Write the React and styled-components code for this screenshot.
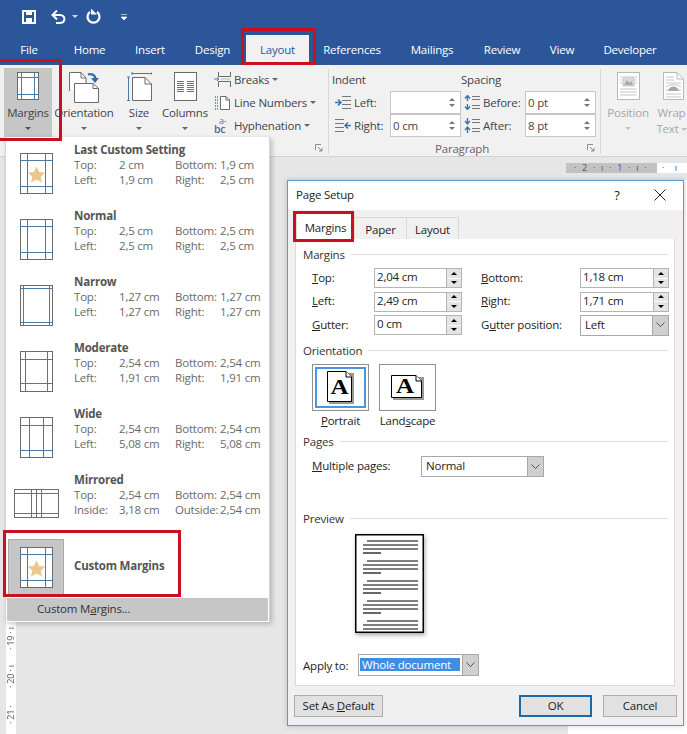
import React from "react";
import styled, { createGlobalStyle } from "styled-components";

const Global = createGlobalStyle`
  html, body { margin: 0; padding: 0; background: #e6e6e6; }
  * { box-sizing: border-box; }
`;

const Page = styled.div`
  position: relative;
  width: 687px;
  height: 734px;
  overflow: hidden;
  display: flex;
  flex-direction: column;
  background: #e6e6e6;
  font-family: "Open Sans", "Noto Sans", sans-serif;
  font-size: 11.5px;
  letter-spacing: -0.2px;
  color: #444;
`;
const Glyph = styled.svg`
  display: block;
  flex: none;
  margin-left: ${p => p.$ml || 0}px;
`;
const TitleBar = styled.div`
  height: 33px;
  background: #2b579a;
  display: flex;
  align-items: center;
  padding: 0 0 0 22px;
  flex: none;
`;
const QatIcon = styled.svg`
  display: block;
  flex: none;
  margin-left: ${p => p.$before || 0}px;
  margin-right: ${p => p.$gap || 0}px;
`;
const TabBar = styled.div`
  height: 32px;
  background: #2b579a;
  display: flex;
  align-items: flex-end;
  flex: none;
`;
const Tab = styled.div`
  width: ${p => p.$w}px;
  height: 30px;
  padding-bottom: 2px;
  display: flex;
  align-items: center;
  justify-content: center;
  color: ${p => (p.$active ? "#2b579a" : "#fff")};
  background: ${p => (p.$active ? "#f1f1f1" : "transparent")};
`;
const Ribbon = styled.div`
  height: 92px;
  flex: none;
  display: flex;
  background: #f1f1f1;
  border-bottom: 1px solid #d2d2d2;
`;
const Group = styled.div`
  width: ${p => p.$w}px;
  flex: none;
  display: flex;
  flex-direction: column;
`;
const GroupDivider = styled.div`
  width: 1px;
  flex: none;
  margin: 4px 0 2px;
  background: #d8d8d8;
`;
const GroupBody = styled.div`
  height: 75px;
  padding: 3px 0 0 ${p => p.$pad || 0}px;
  display: flex;
  flex: none;
`;
const GroupFooter = styled.div`
  flex: 1;
  display: grid;
  grid-template-columns: 1fr auto 1fr;
  align-items: center;
  padding-right: 5px;
  color: #666;
`;
const Launcher = styled.svg`
  justify-self: end;
  display: block;
`;
const BigButton = styled.div`
  width: ${p => p.$w}px;
  height: 69px;
  margin-left: ${p => p.$ml || 0}px;
  flex: none;
  display: flex;
  flex-direction: column;
  align-items: center;
  padding-top: 4px;
  background: ${p => (p.$on ? "#c6c6c6" : "transparent")};
  color: ${p => (p.$off ? "#a6a6a6" : "#444")};
  white-space: nowrap;
`;
const BigIcon = styled.div`
  height: 31px;
  flex: none;
  display: flex;
  align-items: flex-start;
  justify-content: center;
`;
const BigLabel = styled.div`
  height: 16px;
  line-height: 16px;
  margin-top: ${p => p.$mt ?? 2}px;
`;
const Caret = styled.span`
  display: inline-block;
  width: 0;
  height: 0;
  flex: none;
  border-left: 3px solid transparent;
  border-right: 3px solid transparent;
  border-top: 3px solid ${p => p.$color || "#666"};
  margin-top: ${p => p.$mt || 0}px;
  margin-left: ${p => p.$ml || 0}px;
  vertical-align: middle;
`;
const SmallStack = styled.div`
  margin-left: 4px;
  display: flex;
  flex-direction: column;
`;
const SmallRow = styled.div`
  height: 23px;
  display: flex;
  align-items: center;
  white-space: nowrap;
`;
const SmallIcon = styled.svg`
  display: block;
  flex: none;
  width: 17px;
  height: 17px;
  margin-right: 3px;
  overflow: visible;
`;
const ParaCol = styled.div`
  width: ${p => p.$w}px;
  flex: none;
  display: flex;
  flex-direction: column;
`;
const ParaHead = styled.div`
  height: 23px;
  display: flex;
  align-items: center;
`;
const ParaRow = styled.div`
  height: 23px;
  display: flex;
  align-items: center;
`;
const ParaIcon = styled.svg`
  display: block;
  flex: none;
  margin: 0 3px 0 ${p => p.$ml || 0}px;
`;
const RibbonSpin = styled.div`
  width: 71px;
  height: 23px;
  margin-left: auto;
  background: #fff;
  border: 1px solid #c6c6c6;
  display: flex;
  align-items: center;
  justify-content: space-between;
  padding: 0 5px 0 2px;
`;
const RibbonArrows = styled.div`
  display: flex;
  flex-direction: column;
  gap: 3px;
`;
const UpArrow = styled.span`
  display: block;
  width: 0;
  height: 0;
  border-left: 3px solid transparent;
  border-right: 3px solid transparent;
  border-bottom: 3px solid ${p => p.$c || "#777"};
`;
const DownArrow = styled.span`
  display: block;
  width: 0;
  height: 0;
  border-left: 3px solid transparent;
  border-right: 3px solid transparent;
  border-top: 3px solid ${p => p.$c || "#777"};
`;
const WrapClip = styled.div`
  width: 31px;
  margin-left: 4px;
  flex: none;
`;
const RulerBar = styled.div`
  height: 23px;
  flex: none;
  display: flex;
  justify-content: flex-end;
  padding-top: 6px;
`;
const HRuler = styled.div`
  width: 121px;
  height: 10px;
  display: flex;
  background: #fff;
  font-size: 9px;
  line-height: 10px;
  color: #555;
  white-space: nowrap;
`;
const HRulerDark = styled.div`
  width: 91px;
  flex: none;
  background: #c2c2c2;
  padding-left: 8px;
  letter-spacing: 1.7px;
`;
const HRulerLight = styled.div`
  padding-left: 5px;
  letter-spacing: 4px;
`;
const Workspace = styled.div`
  flex: 1;
  display: flex;
  justify-content: space-between;
  padding-left: 6px;
`;
const VRuler = styled.div`
  width: 10px;
  background: #fff;
  display: flex;
  flex-direction: column;
  justify-content: flex-end;
  align-items: center;
`;
const VRulerCell = styled.div`
  height: 38px;
  flex: none;
  writing-mode: vertical-rl;
  transform: rotate(180deg);
  font-size: 9px;
  line-height: 10px;
  color: #555;
  text-align: center;
  white-space: nowrap;
`;
const DocPage = styled.div`
  width: 119px;
  background: #fff;
`;

const Menu = styled.div`
  position: absolute;
  left: 5px;
  top: 137px;
  width: 265px;
  height: 485px;
  background: #fff;
  border: 1px solid #d4d4d4;
  border-top: none;
  box-shadow: 2px 2px 5px rgba(0, 0, 0, 0.22);
  padding-top: 3px;
  display: flex;
  flex-direction: column;
`;
const MenuRow = styled.div`
  height: 66px;
  flex: none;
  display: flex;
  padding-top: 2px;
`;
const MenuIconCol = styled.div`
  width: 61px;
  height: 57px;
  margin-top: 3px;
  margin-right: 7px;
  flex: none;
  display: flex;
  align-items: center;
  justify-content: center;
`;
const MenuText = styled.div`
  display: grid;
  grid-template-columns: 45px 56px 45px auto;
  grid-auto-rows: 15px;
  line-height: 15px;
  color: #6a6a6a;
  white-space: nowrap;
`;
const MenuTitle = styled.div`
  grid-column: 1 / -1;
  font-weight: 700;
  color: #555;
`;
const CustomRow = styled.div`
  height: 60px;
  flex: none;
  display: flex;
  align-items: center;
  margin-top: 1px;
`;
const CustomThumb = styled.div`
  width: 56px;
  height: 56px;
  margin-left: 2px;
  margin-right: 10px;
  background: #c6c6c6;
  border: 1px solid #a8a8a8;
  display: flex;
  align-items: center;
  justify-content: center;
`;
const CustomLabel = styled.div`
  font-weight: 700;
  color: #555;
  padding-bottom: 3px;
`;
const MenuFooter = styled.div`
  height: 25px;
  flex: none;
  background: #c6c6c6;
  border: 1px solid #fff;
  padding: 0 0 2px 30px;
  display: flex;
  align-items: center;
  color: #333;
`;
const Key = styled.span`
  text-decoration: underline;
`;

const Dialog = styled.div`
  position: absolute;
  left: 287px;
  top: 180px;
  width: 397px;
  height: 546px;
  background: #f0f0f0;
  border: 1px solid #5a9ad0;
  box-shadow: 0 0 5px rgba(0, 0, 0, 0.2);
  color: #222;
  display: flex;
  flex-direction: column;
`;
const DialogTitle = styled.div`
  height: 29px;
  flex: none;
  background: #fff;
  display: flex;
  align-items: center;
  padding: 0 0 2px 8px;
`;
const TitleText = styled.div`
  flex: 1;
`;
const HelpMark = styled.div`
  width: 20px;
  text-align: center;
  font-size: 13px;
  margin-right: 27px;
`;
const CloseMark = styled.svg`
  display: block;
  margin-right: 17px;
`;
const DialogTabs = styled.div`
  height: 29px;
  flex: none;
  display: flex;
  align-items: flex-end;
  padding-left: 8px;
`;
const DialogTab = styled.div`
  width: ${p => p.$w}px;
  height: ${p => (p.$active ? 27 : 22)}px;
  padding-top: ${p => (p.$active ? 3 : 1)}px;
  display: flex;
  align-items: center;
  justify-content: center;
  background: ${p => (p.$active ? "#fff" : "#f0f0f0")};
  border: 1px solid #d9d9d9;
  border-bottom: none;
  margin-right: -1px;
`;
const Panel = styled.div`
  height: 447px;
  flex: none;
  margin: 0 8px 0 7px;
  background: #fff;
  border: 1px solid #d9d9d9;
  border-top: none;
  padding: 0 6px 0 7px;
  display: flex;
  flex-direction: column;
`;
const SectionHead = styled.div`
  height: 14px;
  line-height: 14px;
  flex: none;
  margin-top: ${p => p.$mt}px;
  margin-bottom: ${p => p.$mb}px;
  display: flex;
  align-items: center;
  gap: 6px;
  color: #333;
  &::after {
    content: "";
    flex: 1;
    height: 1px;
    background: #dcdcdc;
    margin-top: -2px;
  }
`;
const FieldGrid = styled.div`
  display: grid;
  grid-template-columns: 62px 88px 19px 99px 89px;
  grid-auto-rows: 20px;
  row-gap: 3.5px;
  padding-left: 9px;
  align-items: center;
`;
const FieldLabel = styled.div`
  white-space: nowrap;
  grid-column: ${p => p.$col};
  padding-bottom: 2px;
`;
const SpinBox = styled.div`
  height: 20px;
  border: 1px solid #b4b4b4;
  background: #fff;
  display: flex;
  justify-content: space-between;
  padding-left: 2px;
  line-height: 16px;
  grid-column: ${p => p.$col};
`;
const SpinButtons = styled.div`
  width: 16px;
  flex: none;
  margin: -1px -1px -1px 0;
  display: flex;
  flex-direction: column;
  border: 1px solid #b4b4b4;
  background: #fff;
`;
const SpinButton = styled.div`
  flex: 1;
  background: #e4e4e4;
  display: flex;
  align-items: center;
  justify-content: center;
  & + & {
    border-top: 1px solid #fff;
  }
`;
const Combo = styled.div`
  height: ${p => p.$h || 21}px;
  width: ${p => (p.$w ? p.$w + "px" : "auto")};
  border: 1px solid #a8a8a8;
  background: #fff;
  display: flex;
  align-items: stretch;
  padding-left: ${p => p.$pl ?? 4}px;
  grid-column: ${p => p.$col || "auto"};
  flex: none;
`;
const ComboValue = styled.div`
  flex: 1;
  display: flex;
  align-items: center;
  padding-bottom: 2px;
`;
const ComboButton = styled.div`
  width: 17px;
  flex: none;
  margin: -1px -1px -1px 0;
  background: #cfcfcf;
  border: 1px solid #a8a8a8;
  display: flex;
  align-items: center;
  justify-content: center;
`;
const Selected = styled.span`
  background: #3d8ee6;
  color: #fff;
  height: 13px;
  line-height: 13px;
  width: 100px;
  padding-left: 2px;
  white-space: nowrap;
`;
const OrientRow = styled.div`
  display: flex;
  gap: 10px;
  padding-left: 9px;
`;
const OrientItem = styled.div`
  width: 57px;
  display: flex;
  flex-direction: column;
  align-items: center;
`;
const OrientButton = styled.div`
  width: 57px;
  height: 47px;
  border: 1px solid #8f8f8f;
  background: #fff;
  display: flex;
  align-items: center;
  justify-content: center;
  ${p => p.$focus && "box-shadow: inset 0 0 0 2px #fff, inset 0 0 0 4px #4a95e0;"}
`;
const OrientLabel = styled.div`
  height: 14px;
  line-height: 14px;
  margin-top: 3px;
  white-space: nowrap;
`;
const PagesRow = styled.div`
  display: flex;
  align-items: center;
  padding-left: 9px;
  height: 21px;
`;
const PagesLabel = styled.div`
  width: 109px;
  white-space: nowrap;
  padding-bottom: 2px;
`;
const PreviewSheet = styled.svg`
  display: block;
  flex: none;
  margin-left: 52px;
  filter: drop-shadow(1px 2px 2px rgba(0, 0, 0, 0.35));
`;
const ApplyRow = styled.div`
  display: flex;
  align-items: center;
  margin-top: 21px;
`;
const ApplyLabel = styled.div`
  width: 55px;
  white-space: nowrap;
`;
const DialogFooter = styled.div`
  flex: 1;
  display: flex;
  align-items: flex-start;
  padding: 9px 6px 0;
`;
const PushButton = styled.div`
  width: ${p => p.$w}px;
  height: 22px;
  margin-left: ${p => p.$ml || 0}px;
  padding-bottom: 2px;
  background: #e1e1e1;
  border: ${p => (p.$default ? "2px solid #1b6aa8" : "1px solid #adadad")};
  display: flex;
  align-items: center;
  justify-content: center;
  white-space: nowrap;
`;
const Callout = styled.div`
  position: absolute;
  left: ${p => p.$x}px;
  top: ${p => p.$y}px;
  width: ${p => p.$w}px;
  height: ${p => p.$h}px;
  border: 3px solid #c8101e;
  pointer-events: none;
`;

const GREY = "#6b6b6b";
const BLUE = "#4a7aa8";

const MarginGlyph = ({ w = 33, h = 41, vx, hy, star, stroke = GREY, blue = BLUE, mirrored }) => (
  <Glyph width={w} height={h} viewBox={`0 0 ${w} ${h}`}>
    <rect x=".5" y=".5" width={w - 1} height={h - 1} fill="#fff" stroke={stroke} />
    {vx.map(x => <line key={"v" + x} x1={x + 0.5} x2={x + 0.5} y1="0" y2={h} stroke={blue} />)}
    {hy.map(y => <line key={"h" + y} y1={y + 0.5} y2={y + 0.5} x1="0" x2={w} stroke={blue} />)}
    {mirrored && <line x1={w / 2} x2={w / 2} y1="0" y2={h} stroke={stroke} />}
    {star && (
      <polygon
        points="16.5,13.5 19.2,19 25.2,19.6 20.7,23.7 22,29.5 16.5,26.6 11,29.5 12.3,23.7 7.8,19.6 13.8,19"
        fill="#ecc78c"
      />
    )}
  </Glyph>
);

const OrientationGlyph = () => (
  <Glyph width="30" height="31" viewBox="0 0 30 31">
    <path d="M.5 19V.5H12L17 6V11" fill="#fff" stroke="#6b6b6b" />
    <path d="M12 .5V6H17" fill="none" stroke="#6b6b6b" />
    <path d="M5.5 11.5H24L29.5 16.5V30.5H5.5Z" fill="#fff" stroke="#6b6b6b" />
    <path d="M24 11.5V16.5H29.5" fill="none" stroke="#6b6b6b" />
    <path d="M19 2.5C23 1.5 26 3 26.5 6.5" fill="none" stroke="#2f6da8" strokeWidth="2.2" />
    <path d="M22 6H30L26 11Z" fill="#2f6da8" />
  </Glyph>
);
const SizeGlyph = () => (
  <Glyph width="25" height="29" viewBox="0 0 25 29">
    <path d="M5.5 5.5H18L24.5 12V28.5H5.5Z" fill="#fff" stroke="#6b6b6b" />
    <path d="M18 5.5V12H24.5" fill="none" stroke="#6b6b6b" />
    <path d="M5 1.5H25M5 0V3M25 0V3M1.5 5V28.5M0 5H3M0 28.5H3" fill="none" stroke="#4a7aa8" />
  </Glyph>
);
const ColumnsGlyph = () => (
  <Glyph width="23" height="29" viewBox="0 0 23 29">
    <rect x=".5" y=".5" width="22" height="28" fill="#fff" stroke="#6b6b6b" />
    {[9, 11, 13, 15, 17, 19].map(y => (
      <path key={y} d={`M3 ${y + .5}H10M13 ${y + .5}H20`} stroke="#4a7aa8" />
    ))}
  </Glyph>
);
const BreaksIcon = () => (
  <SmallIcon viewBox="0 0 17 17">
    <path d="M4.5 1V5.5H16.5V1M4.5 16V10.5H16.5V16" fill="none" stroke="#6b6b6b" />
    <path d="M0 8H5M3 6L5 8L3 10" fill="none" stroke="#4a7aa8" />
    <path d="M7 8H16" stroke="#b8b8b8" />
  </SmallIcon>
);
const LineNumIcon = () => (
  <SmallIcon viewBox="0 0 17 17">
    <path d="M6.5 2.5H12L15.5 6V15.5H6.5Z" fill="#fff" stroke="#6b6b6b" />
    <path d="M12 2.5V6H15.5" fill="none" stroke="#6b6b6b" />
    <path d="M1 3H4M1 6H4M1 9H4M1 12H4M1 15H4" stroke="#4a7aa8" strokeDasharray="1 1" strokeWidth="1.5" />
  </SmallIcon>
);
const HyphenIcon = () => (
  <SmallIcon viewBox="0 0 17 17">
    <text x="5" y="7" fontSize="9" fontFamily="Open Sans, sans-serif" fill="#4a7aa8">a-</text>
    <text x="0" y="16" fontSize="10.5" fontFamily="Open Sans, sans-serif" fontWeight="600" fill="#4a6a8a">bc</text>
  </SmallIcon>
);
const LinesPlusArrow = ({ flip }) => (
  <ParaIcon $ml={3} width="16" height="13" viewBox="0 0 16 13">
    {flip ? (
      <>
        <path d="M0 .5H9M0 4.5H9M0 8.5H9M0 12.5H9" stroke="#777" />
        <path d="M16 6.5H10M13 3.5L10 6.5L13 9.5" fill="none" stroke="#2f76bd" strokeWidth="1.5" />
      </>
    ) : (
      <>
        <path d="M0 6.5H5M3 3.5L6 6.5L3 9.5" fill="none" stroke="#2f76bd" strokeWidth="1.5" />
        <path d="M7 .5H16M7 4.5H16M7 8.5H16M7 12.5H16" stroke="#777" />
      </>
    )}
  </ParaIcon>
);
const SpacingIcon = ({ down }) => (
  <ParaIcon $ml={3} width="16" height="15" viewBox="0 0 16 15">
    {down ? (
      <path d="M3.5 0V5M1 3L3.5 6L6 3M3.5 15V9M1 12L3.5 9L6 12" fill="none" stroke="#2f76bd" strokeWidth="1.4" />
    ) : (
      <path d="M3.5 6V1M1 3.5L3.5 .5L6 3.5M3.5 9V14M1 11.5L3.5 14.5L6 11.5" fill="none" stroke="#2f76bd" strokeWidth="1.4" />
    )}
    <path d="M8 1.5H16M8 4.5H16M8 10.5H16M8 13.5H16" stroke="#777" />
  </ParaIcon>
);
const PositionGlyph = () => (
  <Glyph width="23" height="28" viewBox="0 0 23 28">
    <rect x=".5" y=".5" width="22" height="27" fill="#fff" stroke="#b8b8b8" />
    <rect x="6" y="5" width="11" height="9" fill="#d9d9d9" stroke="#c8c8c8" />
    <path d="M7 13L10 8L12 11L14 9L16 13Z" fill="#a8a8a8" />
    <path d="M3 5H5M3 8H5M3 11H5M18 5H20M18 8H20M18 11H20M3 17H20M3 20H20M3 23H20" stroke="#c6c6c6" />
  </Glyph>
);
const WrapGlyph = () => (
  <Glyph $ml={3} width="21" height="28" viewBox="0 0 21 28">
    <path d="M.5 .5H14L20.5 7V27.5H.5Z" fill="#fff" stroke="#b8b8b8" />
    <path d="M14 .5V7H20.5" fill="none" stroke="#b8b8b8" />
    <path d="M3 5H11M3 8H11M3 11H18M3 22H18M3 25H18" stroke="#c6c6c6" />
    <path d="M5 19C6 13 15 13 16 19Z" fill="#a8a8a8" />
    <path d="M3 15C6 12 15 12 18 15M3 18H5M16 18H18" fill="none" stroke="#c6c6c6" />
  </Glyph>
);
const LauncherIcon = () => (
  <Launcher width="8" height="8" viewBox="0 0 8 8">
    <path d="M.5 6V.5H6" fill="none" stroke="#8a8a8a" />
    <path d="M3 3L7 7M7 4V7H4" fill="none" stroke="#8a8a8a" />
  </Launcher>
);
const Chevron = () => (
  <Glyph width="9" height="6" viewBox="0 0 9 6">
    <path d="M.5 .5L4.5 4.5L8.5 .5" fill="none" stroke="#555" />
  </Glyph>
);
const OrientGlyph = ({ land }) => {
  const w = land ? 31 : 25;
  const h = land ? 23 : 31;
  const cx = land ? 14 : 12.5;
  const base = land ? 18 : 23;
  return (
    <Glyph width={w + 2} height={h + 2} viewBox={`0 0 ${w + 2} ${h + 2}`}>
      <rect x="2" y="2" width={w} height={h} fill="#999" />
      <path d={`M.5 .5H${w - 6}L${w - .5} 6V${h - .5}H.5Z`} fill="#fff" stroke="#000" />
      <path d={`M${w - 6} .5V6H${w - .5}`} fill="#fff" stroke="#000" />
      <text
        transform={`translate(${cx} ${base}) scale(1.25 1)`}
        textAnchor="middle"
        letterSpacing="0"
        fontFamily="Liberation Serif, serif"
        fontWeight="700"
        fontSize="20"
        fill="#000"
      >
        A
      </text>
    </Glyph>
  );
};

const PreviewLines = () => {
  const blocks = [7, 27, 47, 67, 87];
  return (
    <PreviewSheet width="69" height="99" viewBox="0 0 69 99">
      <rect x=".75" y=".75" width="67.5" height="97.5" fill="#fff" stroke="#000" strokeWidth="1.5" />
      {blocks.map(y => (
        <g key={y} stroke="#000" strokeWidth="1.2">
          <path d={`M12 ${y}H63`} />
          {y + 4 < 97 && <path d={`M8 ${y + 4}H63`} />}
          {y + 8 < 97 && <path d={`M8 ${y + 8}H63`} />}
          {y + 12 < 97 && <path d={`M8 ${y + 12}H26`} />}
        </g>
      ))}
    </PreviewSheet>
  );
};

const presets = [
  { t: "Last Custom Setting", v: ["Top:", "2 cm", "Bottom:", "1,9 cm", "Left:", "1,9 cm", "Right:", "2,5 cm"], vx: [7, 25], hy: [7, 33], star: true },
  { t: "Normal", v: ["Top:", "2,5 cm", "Bottom:", "2,5 cm", "Left:", "2,5 cm", "Right:", "2,5 cm"], vx: [7, 25], hy: [7, 33] },
  { t: "Narrow", v: ["Top:", "1,27 cm", "Bottom:", "1,27 cm", "Left:", "1,27 cm", "Right:", "1,27 cm"], vx: [3, 29], hy: [3, 37] },
  { t: "Moderate", v: ["Top:", "2,54 cm", "Bottom:", "2,54 cm", "Left:", "1,91 cm", "Right:", "1,91 cm"], vx: [5, 27], hy: [8, 32] },
  { t: "Wide", v: ["Top:", "2,54 cm", "Bottom:", "2,54 cm", "Left:", "5,08 cm", "Right:", "5,08 cm"], vx: [9, 23], hy: [8, 33] },
  { t: "Mirrored", v: ["Top:", "2,54 cm", "Bottom:", "2,54 cm", "Inside:", "3,18 cm", "Outside:", "2,54 cm"], w: 45, h: 29, vx: [17, 27], hy: [4, 24], mirrored: true },
];

const tabs = [["File", 58], ["Home", 63], ["Insert", 58], ["Design", 67], ["Layout", 63, true], ["References", 86], ["Mailings", 74], ["Review", 66], ["View", 54], ["Developer", 82]];

const Spin = ({ value, col }) => (
  <SpinBox $col={col}>
    <span>{value}</span>
    <SpinButtons>
      <SpinButton><UpArrow $c="#000" /></SpinButton>
      <SpinButton><DownArrow $c="#000" /></SpinButton>
    </SpinButtons>
  </SpinBox>
);

export default function App() {
  return (
    <Page>
      <Global />
      <TitleBar>
        <QatIcon $gap={15} width="14" height="14" viewBox="0 0 14 14">
          <path d="M1 1H13V13H1Z" fill="none" stroke="#fff" strokeWidth="2" />
          <rect x="4" y="1" width="6" height="4" fill="#fff" />
          <rect x="4" y="8" width="6" height="5" fill="#fff" />
        </QatIcon>
        <QatIcon $gap={3} width="15" height="14" viewBox="0 0 15 14">
          <path d="M1.5 5H9C15 5 15 13 8.5 13H5" fill="none" stroke="#fff" strokeWidth="2" />
          <path d="M6 0.5L1.5 5L6 9.5" fill="none" stroke="#fff" strokeWidth="2" />
        </QatIcon>
        <Caret $color="#cfd9e8" $ml={3} />
        <QatIcon $before={8} $gap={20} width="15" height="15" viewBox="0 0 15 15">
          <path d="M4 2.8A6 6 0 1 0 11 2.8" fill="none" stroke="#fff" strokeWidth="2.2" />
          <path d="M3 0V6H9" fill="#fff" transform="translate(2 -0.5)" />
        </QatIcon>
        <QatIcon width="6" height="6" viewBox="0 0 6 6">
          <path d="M0 .5H6M0 3H6L3 6Z" fill="#fff" stroke="#fff" strokeWidth=".6" />
        </QatIcon>
      </TitleBar>
      <TabBar>
        {tabs.map(([t, w, a]) => <Tab key={t} $w={w} $active={a}>{t}</Tab>)}
      </TabBar>
      <Ribbon>
        <Group $w={328}>
          <GroupBody $pad={4}>
            <BigButton $w={48} $on>
              <BigIcon><MarginGlyph w={22} h={28} vx={[4, 17]} hy={[5, 22]} /></BigIcon>
              <BigLabel>Margins</BigLabel>
              <Caret $mt={6} $color="#555" />
            </BigButton>
            <BigButton $w={60} $ml={2}>
              <BigIcon><OrientationGlyph /></BigIcon>
              <BigLabel>Orientation</BigLabel>
              <Caret $mt={6} />
            </BigButton>
            <BigButton $w={40} $ml={5}>
              <BigIcon><SizeGlyph /></BigIcon>
              <BigLabel>Size</BigLabel>
              <Caret $mt={6} />
            </BigButton>
            <BigButton $w={50} $ml={1}>
              <BigIcon><ColumnsGlyph /></BigIcon>
              <BigLabel>Columns</BigLabel>
              <Caret $mt={6} />
            </BigButton>
            <SmallStack>
              <SmallRow><BreaksIcon />Breaks<Caret $ml={3} /></SmallRow>
              <SmallRow><LineNumIcon />Line Numbers<Caret $ml={3} /></SmallRow>
              <SmallRow><HyphenIcon />Hyphenation<Caret $ml={3} /></SmallRow>
            </SmallStack>
          </GroupBody>
          <GroupFooter><span /><span /><LauncherIcon /></GroupFooter>
        </Group>
        <GroupDivider />
        <Group $w={271}>
          <GroupBody $pad={3}>
            <ParaCol $w={129}>
              <ParaHead>Indent</ParaHead>
              <ParaRow>
                <LinesPlusArrow />Left:
                <RibbonSpin><span /><RibbonArrows><UpArrow /><DownArrow /></RibbonArrows></RibbonSpin>
              </ParaRow>
              <ParaRow>
                <LinesPlusArrow flip />Right:
                <RibbonSpin><span>0 cm</span><RibbonArrows><UpArrow /><DownArrow /></RibbonArrows></RibbonSpin>
              </ParaRow>
            </ParaCol>
            <ParaCol $w={135}>
              <ParaHead>Spacing</ParaHead>
              <ParaRow>
                <SpacingIcon />Before:
                <RibbonSpin><span>0 pt</span><RibbonArrows><UpArrow /><DownArrow /></RibbonArrows></RibbonSpin>
              </ParaRow>
              <ParaRow>
                <SpacingIcon down />After:
                <RibbonSpin><span>8 pt</span><RibbonArrows><UpArrow /><DownArrow /></RibbonArrows></RibbonSpin>
              </ParaRow>
            </ParaCol>
          </GroupBody>
          <GroupFooter><span /><span>Paragraph</span><LauncherIcon /></GroupFooter>
        </Group>
        <GroupDivider />
        <Group $w={86}>
          <GroupBody $pad={3}>
            <BigButton $w={48} $off>
              <BigIcon><PositionGlyph /></BigIcon>
              <BigLabel>Position</BigLabel>
              <Caret $mt={6} $color="#c0c0c0" />
            </BigButton>
            <WrapClip>
              <BigButton $w={31} $off>
                <BigIcon><WrapGlyph /></BigIcon>
                <BigLabel>Wrap</BigLabel>
                <BigLabel $mt={0}>Text<Caret $ml={2} $color="#c0c0c0" /></BigLabel>
              </BigButton>
            </WrapClip>
          </GroupBody>
        </Group>
      </Ribbon>
      <RulerBar>
        <HRuler>
          <HRulerDark>· 2 · ı · 1 · ı ·</HRulerDark>
          <HRulerLight>· ı</HRulerLight>
        </HRuler>
      </RulerBar>
      <Workspace>
        <VRuler>
          <VRulerCell>· 19 · ı</VRulerCell>
          <VRulerCell>· 20 · ı</VRulerCell>
          <VRulerCell>· 21 ·</VRulerCell>
        </VRuler>
        <DocPage />
      </Workspace>

      <Menu>
        {presets.map(p => (
          <MenuRow key={p.t}>
            <MenuIconCol>
              <MarginGlyph w={p.w || 33} h={p.h || 41} vx={p.vx} hy={p.hy} star={p.star} mirrored={p.mirrored} />
            </MenuIconCol>
            <MenuText>
              <MenuTitle>{p.t}</MenuTitle>
              {p.v.map((c, i) => <span key={i}>{c}</span>)}
            </MenuText>
          </MenuRow>
        ))}
        <CustomRow>
          <CustomThumb><MarginGlyph vx={[7, 25]} hy={[7, 33]} star /></CustomThumb>
          <CustomLabel>Custom Margins</CustomLabel>
        </CustomRow>
        <MenuFooter><span>Custom M<Key>a</Key>rgins...</span></MenuFooter>
      </Menu>

      <Dialog>
        <DialogTitle>
          <TitleText>Page Setup</TitleText>
          <HelpMark>?</HelpMark>
          <CloseMark width="12" height="12" viewBox="0 0 12 12">
            <path d="M.5 .5L11.5 11.5M11.5 .5L.5 11.5" stroke="#222" />
          </CloseMark>
        </DialogTitle>
        <DialogTabs>
          <DialogTab $w={59} $active>Margins</DialogTab>
          <DialogTab $w={53}>Paper</DialogTab>
          <DialogTab $w={53}>Layout</DialogTab>
        </DialogTabs>
        <Panel>
          <SectionHead $mt={9} $mb={6}>Margins</SectionHead>
          <FieldGrid>
            <FieldLabel $col="1"><Key>T</Key>op:</FieldLabel>
            <Spin col="2" value="2,04 cm" />
            <FieldLabel $col="4"><Key>B</Key>ottom:</FieldLabel>
            <Spin col="5" value="1,18 cm" />
            <FieldLabel $col="1"><Key>L</Key>eft:</FieldLabel>
            <Spin col="2" value="2,49 cm" />
            <FieldLabel $col="4"><Key>R</Key>ight:</FieldLabel>
            <Spin col="5" value="1,71 cm" />
            <FieldLabel $col="1"><Key>G</Key>utter:</FieldLabel>
            <Spin col="2" value="0 cm" />
            <FieldLabel $col="4">G<Key>u</Key>tter position:</FieldLabel>
            <Combo $col="5" $h={21}>
              <ComboValue>Left</ComboValue>
              <ComboButton><Chevron /></ComboButton>
            </Combo>
          </FieldGrid>
          <SectionHead $mt={9} $mb={6}>Orientation</SectionHead>
          <OrientRow>
            <OrientItem>
              <OrientButton $focus><OrientGlyph /></OrientButton>
              <OrientLabel><Key>P</Key>ortrait</OrientLabel>
            </OrientItem>
            <OrientItem>
              <OrientButton><OrientGlyph land /></OrientButton>
              <OrientLabel>Land<Key>s</Key>cape</OrientLabel>
            </OrientItem>
          </OrientRow>
          <SectionHead $mt={7} $mb={7}>Pages</SectionHead>
          <PagesRow>
            <PagesLabel><Key>M</Key>ultiple pages:</PagesLabel>
            <Combo $w={123} $h={21}>
              <ComboValue>Normal</ComboValue>
              <ComboButton><Chevron /></ComboButton>
            </Combo>
          </PagesRow>
          <SectionHead $mt={35} $mb={8}>Preview</SectionHead>
          <PreviewLines />
          <ApplyRow>
            <ApplyLabel>Appl<Key>y</Key> to:</ApplyLabel>
            <Combo $w={121} $h={22} $pl={1}>
              <ComboValue><Selected>Whole document</Selected></ComboValue>
              <ComboButton><Chevron /></ComboButton>
            </Combo>
          </ApplyRow>
        </Panel>
        <DialogFooter>
          <PushButton $w={89}><span>Set As <Key>D</Key>efault</span></PushButton>
          <PushButton $w={73} $ml={136} $default>OK</PushButton>
          <PushButton $w={74} $ml={11}>Cancel</PushButton>
        </DialogFooter>
      </Dialog>

      <Callout $x={241} $y={28} $w={75} $h={37} />
      <Callout $x={-4} $y={59} $w={66} $h={82} />
      <Callout $x={3} $y={530} $w={178} $h={67} />
      <Callout $x={293} $y={211} $w={61} $h={31} />
    </Page>
  );
}
